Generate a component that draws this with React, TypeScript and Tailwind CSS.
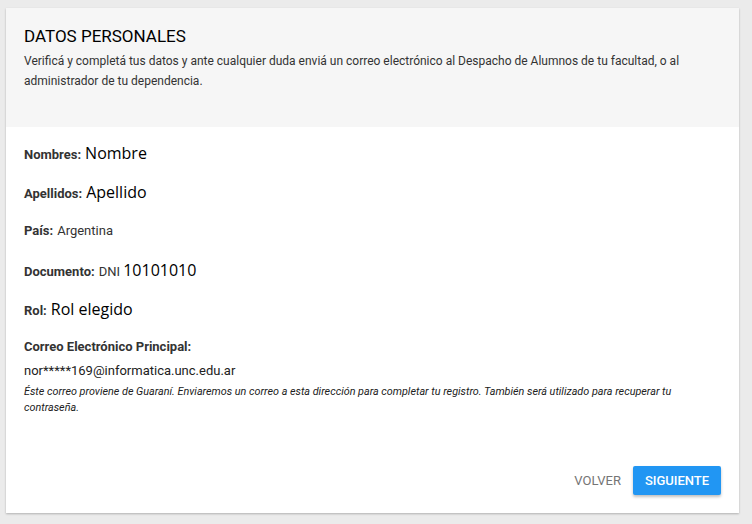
import React from "react";

const roboto = { fontFamily: "Roboto, 'Liberation Sans', sans-serif" };

function Row({ label, children }: { label: string; children: React.ReactNode }) {
  return (
    <div className="h-[39px] text-[13px] leading-[24px] text-[#212121] whitespace-nowrap">
      <span className="font-bold text-[#333]">{label}</span>
      <span className="ml-[4px]">{children}</span>
    </div>
  );
}

const Big = ({ children }: { children: React.ReactNode }) => (
  <span className="text-[16px] leading-[24px] text-black" style={{ fontFamily: "'Open Sans', 'Noto Sans', sans-serif" }}>
    {children}
  </span>
);

export default function App() {
  return (
    <div className="w-[752px] h-[524px] bg-[#ebebeb] pt-[8px] pl-[6px] pr-[13px]" style={roboto}>
      <div className="bg-white shadow-[0_1px_2px_rgba(0,0,0,0.25)] h-[505px] flex flex-col">
        <div className="bg-[#f6f6f6] h-[119px] px-[18px] pt-[16px]">
          <h1 className="text-[17px] leading-[24px] text-black">DATOS PERSONALES</h1>
          <p className="text-[12px] leading-[20px] text-[#333] mt-[3px] pr-[40px]">
            Verificá y completá tus datos y ante cualquier duda enviá un correo electrónico al Despacho de Alumnos de tu facultad, o al administrador de tu dependencia.
          </p>
        </div>
        <div className="px-[18px] pt-[14px] flex-1 flex flex-col">
          <Row label="Nombres:"><Big>Nombre</Big></Row>
          <Row label="Apellidos:"><Big>Apellido</Big></Row>
          <Row label="País:"><span className="text-[#333]">Argentina</span></Row>
          <Row label="Documento:"><span className="text-[#333]">DNI </span><Big>10101010</Big></Row>
          <Row label="Rol:"><Big>Rol elegido</Big></Row>
          <div className="mt-[1px] text-[13px] font-bold text-[#333] leading-[20px]">Correo Electrónico Principal:</div>
          <div className="mt-[4px] text-[13px] text-[#212121] leading-[20px]">nor*****169@informatica.unc.edu.ar</div>
          <p className="mt-[3px] text-[10.8px] italic text-[#212121] leading-[16px] pr-[20px]">
            Éste correo proviene de Guaraní. Enviaremos un correo a esta dirección para completar tu registro. También será utilizado para recuperar tu contraseña.
          </p>
          <div className="mt-auto mb-[18px] flex justify-end items-center gap-[12px]">
            <button className="text-[13px] text-[#757575] h-[29px]">VOLVER</button>
            <button className="text-[13px] font-medium text-white bg-[#2196f3] rounded-[2px] h-[29px] w-[88px] shadow-[0_2px_3px_rgba(0,0,0,0.25)]">
              SIGUIENTE
            </button>
          </div>
        </div>
      </div>
    </div>
  );
}
